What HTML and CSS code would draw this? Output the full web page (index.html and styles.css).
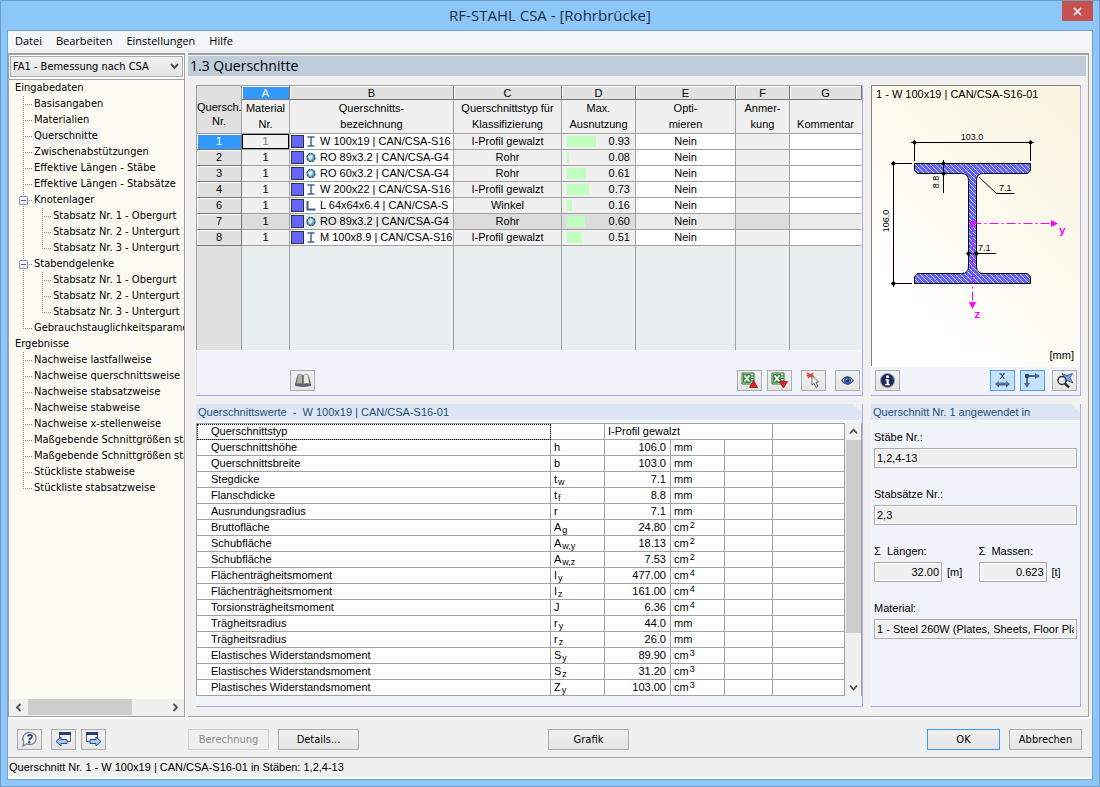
FILE: index.html
```html
<!DOCTYPE html>
<html lang="de">
<head>
<meta charset="utf-8">
<title>RF-STAHL CSA - [Rohrbrücke]</title>
<link rel="stylesheet" href="styles.css">
</head>
<body>
<svg class="defs" width="0" height="0" aria-hidden="true">
  <defs>
    <linearGradient id="steel" x1="0" y1="0" x2="0" y2="1"><stop offset="0" stop-color="#7d94b8"/><stop offset="1" stop-color="#2c4674"/></linearGradient>
    <radialGradient id="tube" cx=".4" cy=".4" r=".7"><stop offset="0" stop-color="#bfe6f5"/><stop offset="1" stop-color="#2f7fa8"/></radialGradient>
    <symbol id="i-beam" viewBox="0 0 10 11"><path d="M1.500 1h7M1.500 10h7M5 1v9" fill="none" stroke="#4a648e" stroke-width="1.500"/></symbol>
    <symbol id="i-tube" viewBox="0 0 10 11"><circle cx="5" cy="5.500" r="4.100" fill="url(#tube)" stroke="#3f5878" stroke-width="1.300" stroke-dasharray="2.500 .6"/><path d="M2.500 4.500 5 3l2 1.500L5.500 7 3.500 8z" fill="#e8f7fd" opacity=".8"/></symbol>
    <symbol id="i-angle" viewBox="0 0 10 11"><path d="M1.500 1v8.500h8" fill="none" stroke="#45597f" stroke-width="2"/></symbol>
    <symbol id="i-excel" viewBox="0 0 18 17"><path d="M1 1h12v11H1z" fill="#dfeedd" stroke="#2e6b35"/><path d="M2 2h8v9H2z" fill="#3d8a46"/><path d="m3.500 3.500 5 6m0-6-5 6" stroke="#fff" stroke-width="1.600"/><path d="M10 4h3M10 6.500h3M10 9h3" stroke="#2e6b35"/></symbol>
  </defs>
</svg>
<div class="window">
  <header class="titlebar">
    <h1 class="title">RF-STAHL CSA - [Rohrbrücke]</h1>
    <button class="close" aria-label="Schließen"><svg width="9" height="9" viewBox="0 0 9 9"><path d="m1 1 7 7M8 1 1 8" stroke="#fff" stroke-width="1.700"/></svg></button>
  </header>
  <div class="client">
    <nav class="menu">
      <a href="#">Datei</a><a href="#">Bearbeiten</a><a href="#">Einstellungen</a><a href="#">Hilfe</a>
    </nav>
    <div class="workspace">
      <aside class="sidebar">
        <div class="case">
          <select class="case-select" aria-label="Bemessungsfall"><option>FA1 - Bemessung nach CSA</option></select>
          <svg class="case-arrow" width="9" height="7" viewBox="0 0 9 7"><path d="m1 1 3.500 4L8 1" fill="none" stroke="#555" stroke-width="2"/></svg>
        </div>
        <div class="tree">
          <a class="root" href="#">Eingabedaten</a>
          <ul class="branch">
            <li><a href="#">Basisangaben</a></li>
            <li><a href="#">Materialien</a></li>
            <li><a href="#" class="current">Querschnitte</a></li>
            <li><a href="#">Zwischenabstützungen</a></li>
            <li><a href="#">Effektive Längen - Stäbe</a></li>
            <li><a href="#">Effektive Längen - Stabsätze</a></li>
            <li><div class="parent"><button class="toggle" aria-label="Knotenlager zuklappen"></button><a href="#">Knotenlager</a></div>
              <ul class="branch nested">
                <li><a href="#">Stabsatz Nr. 1 - Obergurt</a></li>
                <li><a href="#">Stabsatz Nr. 2 - Untergurt</a></li>
                <li><a href="#">Stabsatz Nr. 3 - Untergurt</a></li>
              </ul>
            </li>
            <li><div class="parent"><button class="toggle" aria-label="Stabendgelenke zuklappen"></button><a href="#">Stabendgelenke</a></div>
              <ul class="branch nested">
                <li><a href="#">Stabsatz Nr. 1 - Obergurt</a></li>
                <li><a href="#">Stabsatz Nr. 2 - Untergurt</a></li>
                <li><a href="#">Stabsatz Nr. 3 - Untergurt</a></li>
              </ul>
            </li>
            <li><a href="#">Gebrauchstauglichkeitsparameter</a></li>
          </ul>
          <a class="root" href="#">Ergebnisse</a>
          <ul class="branch">
            <li><a href="#">Nachweise lastfallweise</a></li>
            <li><a href="#">Nachweise querschnittsweise</a></li>
            <li><a href="#">Nachweise stabsatzweise</a></li>
            <li><a href="#">Nachweise stabweise</a></li>
            <li><a href="#">Nachweise x-stellenweise</a></li>
            <li><a href="#">Maßgebende Schnittgrößen stabweise</a></li>
            <li><a href="#">Maßgebende Schnittgrößen stabsatzweise</a></li>
            <li><a href="#">Stückliste stabweise</a></li>
            <li><a href="#">Stückliste stabsatzweise</a></li>
          </ul>
        </div>
        <div class="hscroll">
          <button class="scroll-btn" aria-label="Nach links"><svg width="7" height="9" viewBox="0 0 7 9"><path d="M5.500 1 2 4.500 5.500 8" fill="none" stroke="#505050" stroke-width="1.800"/></svg></button>
          <div class="htrack"><div class="hthumb"></div></div>
          <button class="scroll-btn" aria-label="Nach rechts"><svg width="7" height="9" viewBox="0 0 7 9"><path d="M1.500 1 5 4.500 1.500 8" fill="none" stroke="#505050" stroke-width="1.800"/></svg></button>
        </div>
      </aside>
      <main class="main">
        <h2 class="page-title">1.3 Querschnitte</h2>
        <div class="panels">
          <section class="panel sections">
            <table class="grid">
              <colgroup><col class="c-no"><col class="c-a"><col class="c-b"><col class="c-c"><col class="c-d"><col class="c-e"><col class="c-f"><col></colgroup>
              <thead>
                <tr class="letters"><th rowspan="2" class="corner">Quersch.<br>Nr.</th><th class="active">A</th><th>B</th><th>C</th><th>D</th><th>E</th><th>F</th><th>G</th></tr>
                <tr class="names"><th>Material<br>Nr.</th><th>Querschnitts-<br>bezeichnung</th><th>Querschnittstyp für<br>Klassifizierung</th><th>Max.<br>Ausnutzung</th><th>Opti-<br>mieren</th><th>Anmer-<br>kung</th><th>Kommentar</th></tr>
              </thead>
              <tbody>
                <tr><th class="active">1</th><td class="calc focus">1</td><td><div class="profile"><i class="swatch"></i><svg width="10" height="11"><use href="#i-beam"/></svg><span>W 100x19 | CAN/CSA-S16</span></div></td><td class="calc">I-Profil gewalzt</td><td class="calc"><div class="ratio"><i class="bar" style="width:29px"></i>0.93</div></td><td>Nein</td><td class="calc"></td><td></td></tr>
                <tr><th>2</th><td class="calc">1</td><td><div class="profile"><i class="swatch"></i><svg width="10" height="11"><use href="#i-tube"/></svg><span>RO 89x3.2 | CAN/CSA-G4</span></div></td><td class="calc">Rohr</td><td class="calc"><div class="ratio"><i class="bar" style="width:2px"></i>0.08</div></td><td>Nein</td><td class="calc"></td><td></td></tr>
                <tr><th>3</th><td class="calc">1</td><td><div class="profile"><i class="swatch"></i><svg width="10" height="11"><use href="#i-tube"/></svg><span>RO 60x3.2 | CAN/CSA-G4</span></div></td><td class="calc">Rohr</td><td class="calc"><div class="ratio"><i class="bar" style="width:19px"></i>0.61</div></td><td>Nein</td><td class="calc"></td><td></td></tr>
                <tr><th>4</th><td class="calc">1</td><td><div class="profile"><i class="swatch"></i><svg width="10" height="11"><use href="#i-beam"/></svg><span>W 200x22 | CAN/CSA-S16</span></div></td><td class="calc">I-Profil gewalzt</td><td class="calc"><div class="ratio"><i class="bar" style="width:22px"></i>0.73</div></td><td>Nein</td><td class="calc"></td><td></td></tr>
                <tr><th>6</th><td class="calc">1</td><td><div class="profile"><i class="swatch"></i><svg width="10" height="11"><use href="#i-angle"/></svg><span>L 64x64x6.4 | CAN/CSA-S</span></div></td><td class="calc">Winkel</td><td class="calc"><div class="ratio"><i class="bar" style="width:5px"></i>0.16</div></td><td>Nein</td><td class="calc"></td><td></td></tr>
                <tr class="shaded"><th>7</th><td class="calc">1</td><td><div class="profile"><i class="swatch"></i><svg width="10" height="11"><use href="#i-tube"/></svg><span>RO 89x3.2 | CAN/CSA-G4</span></div></td><td class="calc">Rohr</td><td class="calc"><div class="ratio"><i class="bar" style="width:18px"></i>0.60</div></td><td>Nein</td><td class="calc"></td><td></td></tr>
                <tr><th>8</th><td class="calc">1</td><td><div class="profile"><i class="swatch"></i><svg width="10" height="11"><use href="#i-beam"/></svg><span>M 100x8.9 | CAN/CSA-S16</span></div></td><td class="calc">I-Profil gewalzt</td><td class="calc"><div class="ratio"><i class="bar" style="width:15px"></i>0.51</div></td><td>Nein</td><td class="calc"></td><td></td></tr>
                <tr class="filler"><td class="filler-no"></td><td></td><td></td><td></td><td></td><td></td><td></td><td></td></tr>
              </tbody>
            </table>
            <div class="tools">
              <button class="icon-btn library" aria-label="Bibliothek"><svg width="18" height="15" viewBox="0 0 18 15"><path d="M1 11.500 3 3.500l6 1.500 6-1.500 2 8v1.500L9 14l-8-1z" fill="#56627e"/><path d="M4 1.500Q7 .500 9 2.500v9Q6 9.500 2.500 11z" fill="#b7b1a5" stroke="#77726a" stroke-width=".6"/><path d="M14 1.500Q11 .500 9 2.500v9q3-2 6.500-.5z" fill="#f0ece2" stroke="#77726a" stroke-width=".6"/><path d="M9 2.500v9" stroke="#444" stroke-width="1"/></svg></button>
              <div class="tool-group">
                <button class="icon-btn" aria-label="Excel-Import"><svg width="18" height="17"><use href="#i-excel"/><path d="m12.500 8.500 4 7h-8z" fill="#e22" stroke="#8c1414" stroke-width=".8"/></svg></button>
                <button class="icon-btn" aria-label="Excel-Export"><svg width="18" height="17"><use href="#i-excel"/><path d="m12.500 16-4-6.500h8z" fill="#e22" stroke="#8c1414" stroke-width=".8"/></svg></button>
              </div>
              <button class="icon-btn" aria-label="Auswahl"><svg width="18" height="17" viewBox="0 0 18 17"><path d="m2 1 7 5M8 1 3 6M1.500 3.500h7" stroke="#e04545" stroke-width="1.600"/><path d="M7 3.500 13.500 10l-2.500.3 2 4.200-2 1-2-4.200L7 13z" fill="#fff" stroke="#555" stroke-width=".9"/></svg></button>
              <button class="icon-btn" aria-label="Ansicht"><svg width="13" height="11" viewBox="0 0 15 12"><path d="M.700 6Q7.500-2.500 14.300 6 7.500 14.500.700 6z" fill="#c8d2ef" stroke="#39415c" stroke-width="1.200"/><circle cx="7.500" cy="6" r="3.600" fill="#3d63cf" stroke="#27377a"/><circle cx="7.500" cy="6" r="1.500" fill="#101a45"/><circle cx="6.500" cy="5" r=".7" fill="#fff"/></svg></button>
            </div>
          </section>

          <section class="panel preview">
            <svg class="drawing" viewBox="0 0 208 280" role="img" aria-label="Querschnitt W 100x19">
              <defs>
                <pattern id="hatch" width="5" height="5" patternUnits="userSpaceOnUse"><rect width="5" height="5" fill="#5f5fff"/><path d="M-1-1 6 6M-1 4 1 6M4-1 6 1" stroke="#dcdcff" stroke-width="1"/></pattern>
              </defs>
              <text x="4" y="12" class="t-head">1 - W 100x19 | CAN/CSA-S16-01</text>
              <path d="M42.500 77.500h116v7l-3 3h-44q-7 0-7 7v86q0 7 7 7h44l3 3v7h-116v-7l3-3h44q7 0 7-7v-86q0-7-7-7h-44l-3-3z" fill="url(#hatch)" stroke="#000"/>
              <g fill="none" stroke="#000">
                <path d="M39 56.500h123M42.500 54v21M158.500 54v21M21.500 75v126M19 77.500h21M19 197.500h21M71.500 74v33M107 91l17.500 16.500h18M94 167.500h30"/>
              </g>
              <g>
                <circle cx="42.500" cy="56.500" r="2"/><circle cx="158.500" cy="56.500" r="2"/><circle cx="21.500" cy="77.500" r="2"/><circle cx="21.500" cy="197.500" r="2"/><circle cx="71.500" cy="77.500" r="2"/><circle cx="71.500" cy="87.500" r="2"/><circle cx="96.500" cy="167.500" r="2"/><circle cx="104.500" cy="167.500" r="2"/>
              </g>
              <path d="M100.500 137.500H180" stroke="#f0f" stroke-dasharray="9 3 2 3"/>
              <path d="M100.500 137.500V217" stroke="#f0f" stroke-dasharray="9 3 2 3"/>
              <path d="m179 134 7 3.500-7 3.500zM97 216h7l-3.500 7z" fill="#f0f"/><circle cx="100.500" cy="137.500" r="2.500" fill="#f0f"/>
              <text x="100" y="54" text-anchor="middle" class="t-dim">103.0</text>
              <text transform="translate(17 135) rotate(-90)" text-anchor="middle" class="t-dim">106.0</text>
              <text transform="translate(67 96) rotate(-90)" text-anchor="middle" class="t-dim">8.8</text>
              <text x="127" y="105" class="t-dim">7.1</text>
              <text x="106" y="165" class="t-dim">7.1</text>
              <text x="187" y="148" class="t-axis">y</text>
              <text x="102" y="232" class="t-axis">z</text>
              <text x="202" y="273" text-anchor="end" class="t-unit">[mm]</text>
            </svg>
            <div class="tools">
              <button class="icon-btn info" aria-label="Info"><svg width="17" height="17" viewBox="0 0 17 17"><circle cx="8.500" cy="8.500" r="7" fill="#1d2b57" stroke="#8f99b5"/><circle cx="8.500" cy="4.700" r="1.500" fill="#fff"/><path d="M6.500 7.300h3.300v4.700h1.200v1.300H6.300V12h1.200V8.500h-1z" fill="#fff"/></svg></button>
              <div class="tool-group">
                <button class="icon-btn on" aria-label="Bemaßung"><svg width="17" height="15" viewBox="0 0 17 15"><path d="m6.500 .800 4 5.400M10 .800 6 6.200M5.500.800h2M9 .800h2" stroke="#223" stroke-width=".9"/><path d="m1 11 4-3.500V9.500h7v-2L16 11l-4 3.500v-2H5v2z" fill="url(#steel)"/></svg></button>
                <button class="icon-btn on" aria-label="Achsen"><svg width="17" height="15" viewBox="0 0 17 15"><path d="M3 3h9M3 3v8" stroke="#4a6490" stroke-width="1.800"/><circle cx="3" cy="3" r="2.200" fill="#2c4674"/><path d="m11 0 5 3-5 3zM0 10h6l-3 5z" fill="#4a6aa5"/></svg></button>
              </div>
              <button class="icon-btn" aria-label="Zoom zurücksetzen"><svg width="18" height="17" viewBox="0 0 18 17"><path d="m6 1.500 5 2 5.500-2-2.500 4 3 5.500-5.500-2.500L7 11l2-5z" fill="#7f9fdc" stroke="#2c4880" stroke-width=".8"/><circle cx="6" cy="8.500" r="4" fill="#eef3fb" fill-opacity=".8" stroke="#333" stroke-width="1.500"/><path d="m9 11.500 4 4" stroke="#222" stroke-width="2.400"/></svg></button>
            </div>
          </section>

          <section class="panel values">
            <h3 class="caption">Querschnittswerte&nbsp; -&nbsp; W 100x19 | CAN/CSA-S16-01</h3>
            <div class="value-body">
              <table class="props">
                <colgroup><col><col class="p-sym"><col class="p-val"><col class="p-unit"><col class="p-x"><col class="p-y"></colgroup>
                <tbody>
                  <tr><td class="focus-dots">Querschnittstyp</td><td></td><td colspan="3" class="wide">I-Profil gewalzt</td><td></td></tr>
                  <tr><td>Querschnittshöhe</td><td>h</td><td>106.0</td><td>mm</td><td></td><td></td></tr>
                  <tr><td>Querschnittsbreite</td><td>b</td><td>103.0</td><td>mm</td><td></td><td></td></tr>
                  <tr><td>Stegdicke</td><td>t<sub>w</sub></td><td>7.1</td><td>mm</td><td></td><td></td></tr>
                  <tr><td>Flanschdicke</td><td>t<sub>f</sub></td><td>8.8</td><td>mm</td><td></td><td></td></tr>
                  <tr><td>Ausrundungsradius</td><td>r</td><td>7.1</td><td>mm</td><td></td><td></td></tr>
                  <tr><td>Bruttofläche</td><td>A<sub>g</sub></td><td>24.80</td><td>cm<sup>2</sup></td><td></td><td></td></tr>
                  <tr><td>Schubfläche</td><td>A<sub>w,y</sub></td><td>18.13</td><td>cm<sup>2</sup></td><td></td><td></td></tr>
                  <tr><td>Schubfläche</td><td>A<sub>w,z</sub></td><td>7.53</td><td>cm<sup>2</sup></td><td></td><td></td></tr>
                  <tr><td>Flächenträgheitsmoment</td><td>I<sub>y</sub></td><td>477.00</td><td>cm<sup>4</sup></td><td></td><td></td></tr>
                  <tr><td>Flächenträgheitsmoment</td><td>I<sub>z</sub></td><td>161.00</td><td>cm<sup>4</sup></td><td></td><td></td></tr>
                  <tr><td>Torsionsträgheitsmoment</td><td>J</td><td>6.36</td><td>cm<sup>4</sup></td><td></td><td></td></tr>
                  <tr><td>Trägheitsradius</td><td>r<sub>y</sub></td><td>44.0</td><td>mm</td><td></td><td></td></tr>
                  <tr><td>Trägheitsradius</td><td>r<sub>z</sub></td><td>26.0</td><td>mm</td><td></td><td></td></tr>
                  <tr><td>Elastisches Widerstandsmoment</td><td>S<sub>y</sub></td><td>89.90</td><td>cm<sup>3</sup></td><td></td><td></td></tr>
                  <tr><td>Elastisches Widerstandsmoment</td><td>S<sub>z</sub></td><td>31.20</td><td>cm<sup>3</sup></td><td></td><td></td></tr>
                  <tr><td>Plastisches Widerstandsmoment</td><td>Z<sub>y</sub></td><td>103.00</td><td>cm<sup>3</sup></td><td></td><td></td></tr>
                </tbody>
              </table>
              <div class="vscroll">
                <button class="scroll-btn" aria-label="Nach oben"><svg width="9" height="7" viewBox="0 0 9 7"><path d="m1 5.500 3.500-4 3.500 4" fill="none" stroke="#505050" stroke-width="1.800"/></svg></button>
                <div class="vtrack"><div class="vthumb"></div></div>
                <button class="scroll-btn" aria-label="Nach unten"><svg width="9" height="7" viewBox="0 0 9 7"><path d="m1 1.500 3.500 4 3.500-4" fill="none" stroke="#505050" stroke-width="1.800"/></svg></button>
              </div>
            </div>
          </section>

          <section class="panel usage">
            <h3 class="caption">Querschnitt Nr. 1 angewendet in</h3>
            <div class="fields">
              <div class="field"><label for="members">Stäbe Nr.:</label><input id="members" value="1,2,4-13" readonly></div>
              <div class="field"><label for="sets">Stabsätze Nr.:</label><input id="sets" value="2,3" readonly></div>
              <div class="pair">
                <div class="field"><label for="lengths">Σ&nbsp; Längen:</label><div class="measure"><input id="lengths" value="32.00" readonly><span>[m]</span></div></div>
                <div class="field"><label for="masses">Σ&nbsp; Massen:</label><div class="measure"><input id="masses" value="0.623" readonly><span>[t]</span></div></div>
              </div>
              <div class="field"><label for="material">Material:</label><input id="material" value="1 - Steel 260W (Plates, Sheets, Floor Plates)" readonly></div>
            </div>
          </section>
        </div>
      </main>
    </div>
    <div class="actions">
      <button class="icon-btn help" aria-label="Hilfe"><svg width="17" height="17" viewBox="0 0 17 17"><path d="M9 1.500a6.500 6 0 1 1-3.500 11.200L2 15l.8-4.500A6.500 6 0 0 1 9 1.500z" fill="#f2f4f8" stroke="#7b818c" stroke-width="1.200"/><path d="M6.800 5.500Q7.200 3.700 9 3.800q2.300.2 1.800 2.200-.3 1-1.500 1.600-.9.500-.9 1.700" fill="none" stroke="#27407a" stroke-width="1.800"/><circle cx="8.200" cy="11.300" r="1.200" fill="#27407a"/></svg></button>
      <div class="tool-group">
        <button class="icon-btn" aria-label="Zurück"><svg width="17" height="17" viewBox="0 0 17 17"><path d="M4.500 1.500h11v9h-11z" fill="#eef1f7" stroke="#555f78"/><path d="M4 1h12v3H4z" fill="#2b3f74"/><path d="m1 10.500 5-4.500v2.500h6v4H6V15z" fill="#a8c8f5" stroke="#284a92"/></svg></button>
        <button class="icon-btn" aria-label="Weiter"><svg width="17" height="17" viewBox="0 0 17 17"><path d="M1.500 1.500h11v9h-11z" fill="#eef1f7" stroke="#555f78"/><path d="M1 1h12v3H1z" fill="#2b3f74"/><path d="m16 10.500-5-4.500v2.500H5v4h6V15z" fill="#a8c8f5" stroke="#284a92"/></svg></button>
      </div>
      <div class="calc-actions"><button class="btn" disabled>Berechnung</button><button class="btn">Details...</button></div>
      <button class="btn graphic">Grafik</button>
      <div class="confirm"><button class="btn primary">OK</button><button class="btn">Abbrechen</button></div>
    </div>
    <footer class="status">Querschnitt Nr. 1 - W 100x19 | CAN/CSA-S16-01 in Stäben: 1,2,4-13</footer>
  </div>
</div>
</body>
</html>
```
FILE: styles.css
```css
* { box-sizing: border-box; }
body { margin: 0; font-family: "Liberation Sans", Arial, sans-serif; font-size: 11px; color: #000; }
a { color: inherit; text-decoration: none; }
button, input, select { font: inherit; color: inherit; margin: 0; padding: 0; }
h1, h2, h3 { margin: 0; font-weight: normal; }
.defs { position: absolute; }

.window { display: flex; flex-direction: column; min-height: 100vh; padding: 0 6px 6px; border: 1px solid #6f9dc8; background: #8dc7fa; }
.titlebar { position: relative; display: flex; justify-content: center; height: 29px; }
.title { font: 15px/29px "Open Sans", "Noto Sans", sans-serif; color: #1c2e42; }
.close { position: absolute; top: 0; right: 0; width: 31px; height: 20px; border: 0; background: #c75050; display: grid; place-items: center; }
.client { flex: 1; display: flex; flex-direction: column; border: 1px solid #6ea5d6; background: #f0f0f0; }

.menu { display: flex; gap: 14px; height: 22px; padding: 0 7px; font: 11px/20px "Open Sans", "Noto Sans", sans-serif; background: linear-gradient(#f5f6f7 18px, #f0f0f0 19px); }
.workspace { flex: 1; display: flex; gap: 3px; border-bottom: 2px solid #fff; }

.sidebar { display: flex; flex-direction: column; flex: none; width: 177px; border: 1px solid #a0a0a0; border-top-width: 2px; background: #fbfbf3; box-shadow: 1px 0 #fff; font-family: "DejaVu Sans Condensed", "Noto Sans", sans-serif; }
.case { position: relative; padding: 1px 1px 2px; border-bottom: 1px solid #a0a0a0; background: #fff; }
.case-select { appearance: none; display: block; width: 100%; height: 21px; padding: 0 2px; border: 1px solid #acacac; border-radius: 0; background: linear-gradient(#f0f0f0, #e5e5e5); }
.case-arrow { position: absolute; right: 5px; top: 8px; }
.tree { flex: 1; padding: 0 0 0 6px; line-height: 16px; white-space: nowrap; overflow: hidden; }
.tree a { display: block; }
.tree .branch { list-style: none; margin: 0; padding: 0 0 0 8px; }
.tree .nested { padding-left: 19px; }
.branch > li {
  background:
    repeating-linear-gradient(#888 0 1px, transparent 1px 2px) 0 0 / 1px 100% no-repeat,
    repeating-linear-gradient(90deg, #888 0 1px, transparent 1px 2px) 0 8px / 9px 1px no-repeat;
}
.branch > li:last-child { background-size: 1px 8px, 9px 1px; }
.branch > li > a { width: max-content; margin-left: 10px; padding: 0 2px 0 1px; }
.tree .current { background: #f0f0f0; }
.parent { display: flex; align-items: center; gap: 6px; margin-left: -4px; }
.toggle { width: 9px; height: 9px; border: 1px solid #919191; border-radius: 1px; background: linear-gradient(#3b5a9a, #3b5a9a) 1px 3px / 5px 1px no-repeat, #f4f4f4; }
.hscroll { display: flex; height: 17px; padding-bottom: 1px; background: #f0f0f0; }
.scroll-btn { display: grid; place-items: center; width: 18px; height: 16px; border: 0; background: #f0f0f0; }
.htrack { flex: 1; padding: 0 34px 0 1px; }
.hthumb { height: 100%; background: #cdcdcd; }

.main { flex: 1; min-width: 0; display: flex; flex-direction: column; padding: 1px 2px 9px 0; border: solid #a0a0a0; border-width: 2px 1px 1px 0; margin-right: 3px; }
.page-title { padding-left: 2px; height: 20px; font: 14px/20px "Open Sans", "Noto Sans", sans-serif; background: #bfccd9; }
.panels { flex: 1; display: grid; grid-template-columns: minmax(0, 1fr) 210px; grid-template-rows: auto 1fr; gap: 8px; padding: 9px 5px 0 8px; }
.panel { display: flex; flex-direction: column; border: solid #aaaaee; border-width: 0 1px 1px 0; background: #f0f4fa; }

table { border-collapse: separate; border-spacing: 0; table-layout: fixed; width: 100%; }
th, td { padding: 0; font-weight: normal; line-height: 15px; white-space: nowrap; overflow: hidden; }
.grid { border: solid #a0a0a0; border-width: 1px 0 0 1px; text-align: center; }
.c-no { width: 45px; } .c-a { width: 48px; } .c-b { width: 164px; } .c-c { width: 108px; } .c-d { width: 74px; } .c-e { width: 100px; } .c-f { width: 54px; }
.grid th, .grid td { height: 16px; border: solid #a0a0a0; border-width: 0 1px 1px 0; background: #fff; }
.grid tr > :last-child { border-right-color: #f0f4fa; }
.grid .letters th { height: 14px; line-height: 12px; border-color: #777; background: #e1e1e1; box-shadow: inset 1px 1px #fff; }
.grid .letters .corner { line-height: 14px; padding-top: 8px; border-color: #a0a0a0; box-shadow: none; }
.grid .names th { height: 33px; line-height: 16px; padding-bottom: 1px; vertical-align: bottom; background: #f0f0f0; }
.grid .names { line-height: 16px; }
.grid tbody th { background: #e1e1e1; border-color: #777; box-shadow: inset 1px 1px #fff; }
.grid .calc { background: #f0f0f0; }
.grid th.active, .grid .letters .active { background: #3399ff; color: #fff; }
.grid .focus { box-shadow: inset 0 0 0 1px #000; color: #777; }
.grid .shaded td { background: #ebebeb; }
.grid .shaded .calc { background: #dcdcdc; }
.grid .filler td { height: 104px; border-bottom: 0; background: #e8eeee; }
.grid .filler .filler-no { background: #e1e1e1; }
.profile { display: flex; align-items: center; height: 15px; padding-left: 1px; text-align: left; }
.swatch { flex: none; width: 13px; height: 13px; border: 1px solid #333; background: #6464ff; margin-right: 2px; }
.profile span { margin-left: 4px; }
.ratio { display: flex; align-items: center; justify-content: space-between; height: 15px; padding: 0 5px; }
.bar { height: 11px; background: #c0ffc0; }

.tools { display: flex; align-items: flex-start; gap: 9px; flex: 1; padding: 19px 2px 3px 93px; border-top: 1px solid #fff; }
.sections .tools { border-left: 1px solid #dce6f4; }
.library, .info { margin-right: auto; }
.tool-group { display: flex; gap: 5px; }
.icon-btn { display: grid; place-items: center; flex: none; width: 25px; height: 21px; border: 1px solid #acacac; background: linear-gradient(#f0f0f0, #e5e5e5); }
.icon-btn.on { border-color: #569de5; background: #c4e2fc; }

.drawing { display: block; height: 281px; border: solid #808080; border-width: 1px 0 0 1px; background: linear-gradient(45deg, #fff 15%, #fdfaed 60%, #faf3de); }
.drawing text { font-family: "Liberation Sans", Arial, sans-serif; }
.drawing .t-head { font-size: 11px; }
.drawing .t-dim { font-size: 9px; }
.drawing .t-unit { font-size: 11px; }
.drawing text.t-axis { font: bold 11px "Liberation Mono", monospace; fill: #f0f; }
.preview .tools { gap: 7px; padding: 3px 3px 4px 4px; }

.caption { height: 17px; padding-left: 2px; font-size: 11px; line-height: 17px; color: #1f4e79; border-bottom: 1px solid #fff; background: #dce6f4; clip-path: polygon(0 0, calc(100% - 9px) 0, calc(100% + 1px) 10px, 100% 100%, 0 100%); }
.values, .usage { background: linear-gradient(225deg, #f0f0f0 7px, #f0f4fa 7px); }
.value-body { display: flex; margin-top: 2px; }
.props { flex: 1; border: solid #a0a0a0; border-width: 1px 0 0 1px; background: #fff; }
.p-sym { width: 54px; } .p-val { width: 66px; } .p-unit { width: 54px; } .p-x { width: 48px; } .p-y { width: 72px; }
.props td { height: 16px; padding-left: 3px; border: solid #a0a0a0; border-width: 0 1px 1px 0; }
.props td:first-child { padding-left: 14px; }
.props td:nth-child(3) { padding-right: 4px; text-align: right; }
.props .wide:nth-child(3) { text-align: left; }
.props .focus-dots { outline: 1px dotted #000; outline-offset: -1px; }
sub, sup { font-size: 9px; line-height: 0; margin-left: 1px; }
sub { vertical-align: -2px; }
sup { vertical-align: 3px; }
.vscroll { display: flex; flex-direction: column; width: 17px; padding-left: 1px; border-right: 1px solid #a0a0a0; background: #f0f0f0; }
.vscroll .scroll-btn { width: 15px; height: 17px; }
.vtrack { flex: 1; padding-bottom: 46px; }
.vthumb { height: 100%; background: #cdcdcd; }

.fields { display: flex; flex-direction: column; gap: 18px; padding: 8px 3px; }
.field { display: flex; flex-direction: column; gap: 2px; min-width: 0; }
.field label { line-height: 17px; }
.field input { width: 100%; height: 20px; padding: 0 2px; border: 1px solid #ababab; background: #f0f0f0; box-shadow: inset 0 0 0 1px #fff; }
.pair { display: grid; grid-template-columns: 1fr 1fr; gap: 6px; }
.measure { display: flex; align-items: center; gap: 5px; }
.field .measure input { width: 68px; text-align: right; }

.actions { display: flex; align-items: flex-start; padding: 10px 10px 7px 9px; border-bottom: 1px solid #a0a0a0; font-family: "DejaVu Sans Condensed", "Noto Sans", sans-serif; }
.help { margin-right: 9px; }
.btn { width: 81px; height: 21px; border: 1px solid #acacac; background: linear-gradient(#f0f0f0, #e5e5e5); }
.btn:disabled { color: #8b8b8b; border-color: #d0d0d0; background: #efefef; }
.calc-actions { display: flex; gap: 9px; margin-left: 82px; }
.graphic { margin-left: 189px; }
.confirm { display: flex; gap: 9px; margin-left: auto; }
.confirm .btn { width: 73px; }
.confirm .primary { border-color: #3399ff; }
.status { height: 21px; padding-left: 1px; line-height: 19px; border-bottom: 2px solid #fff; }
```
